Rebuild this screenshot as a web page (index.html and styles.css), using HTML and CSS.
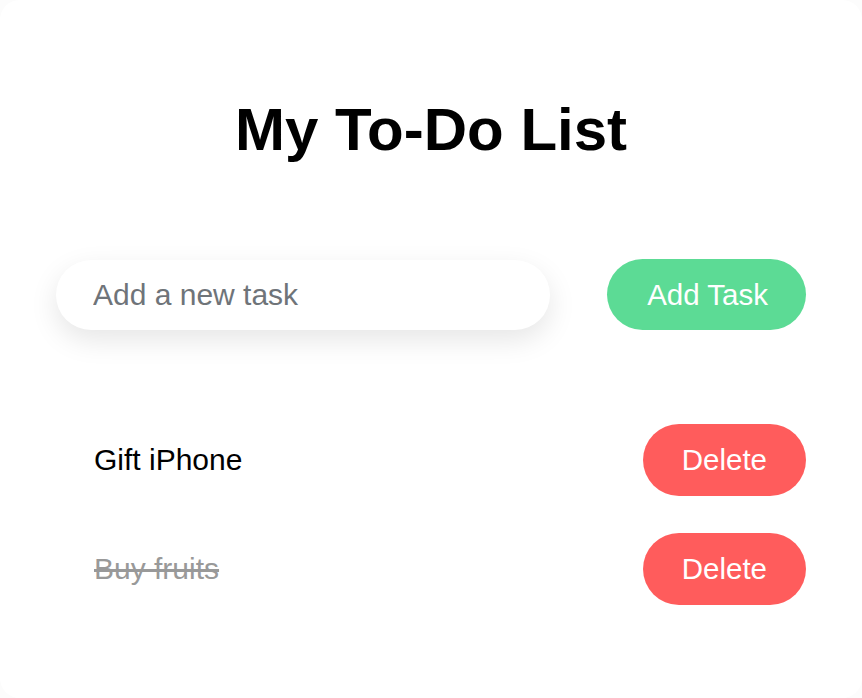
FILE: index.html
```html
<!DOCTYPE html>
<html lang="en">
<head>
<meta charset="utf-8">
<title>My To-Do List</title>
<link rel="stylesheet" href="styles.css">
</head>
<body>
<div class="card">
  <h1 class="title">My To-Do List</h1>
  <div class="add-row">
    <input class="task-input" type="text" placeholder="Add a new task">
    <button class="btn btn-add">Add Task</button>
  </div>
  <ul class="list">
    <li class="item">
      <span class="item-text">Gift iPhone</span>
      <button class="btn btn-delete">Delete</button>
    </li>
    <li class="item">
      <span class="item-text done">Buy fruits</span>
      <button class="btn btn-delete">Delete</button>
    </li>
  </ul>
</div>
</body>
</html>
```
FILE: styles.css
```css
html, body {
  margin: 0;
  padding: 0;
  background: #fcfcfc;
}
body {
  font-family: "Liberation Sans", Arial, sans-serif;
}
.card {
  width: 862px;
  height: 698px;
  box-sizing: border-box;
  background: #ffffff;
  border-radius: 20px;
  padding: 97px 56px 0;
  overflow: hidden;
}
.title {
  margin: 0;
  font-size: 60px;
  line-height: 66px;
  font-weight: bold;
  text-align: center;
  color: #000;
}
.add-row {
  margin-top: 96px;
  display: flex;
  align-items: center;
  gap: 57px;
}
.task-input {
  flex: 1;
  min-width: 0;
  height: 70px;
  box-sizing: border-box;
  border: none;
  outline: none;
  border-radius: 35px;
  padding: 0 37px;
  font-family: inherit;
  font-size: 30px;
  color: #000;
  background: #fff;
  box-shadow: 0 10px 28px rgba(0, 0, 0, 0.1);
}
.task-input::placeholder {
  color: #6f7479;
}
.btn {
  border: none;
  color: #fff;
  font-family: inherit;
  font-size: 29.5px;
  cursor: pointer;
  box-sizing: border-box;
}
.btn-add {
  height: 71px;
  padding: 0 38px 0 40px;
  border-radius: 36px;
  background: #5cdb95;
}
.list {
  list-style: none;
  margin: 94px 0 0;
  padding: 0;
  display: flex;
  flex-direction: column;
  gap: 37px;
}
.item {
  display: flex;
  align-items: center;
  justify-content: space-between;
  padding-left: 38px;
}
.item-text {
  font-size: 30px;
  color: #000;
}
.item-text.done {
  color: #999;
  text-decoration: line-through;
}
.btn-delete {
  height: 72px;
  padding: 0 39px;
  border-radius: 36px;
  background: #ff5c5c;
}
```
